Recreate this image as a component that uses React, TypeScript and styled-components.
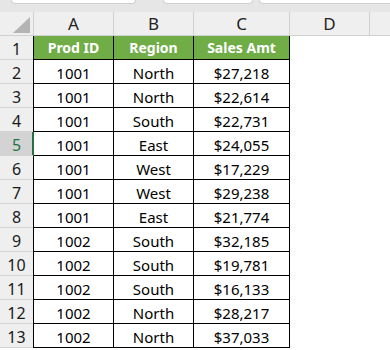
import React from "react";
import styled, { createGlobalStyle } from "styled-components";

const Global = createGlobalStyle`
  html, body { margin: 0; padding: 0; background: #ffffff; }
  body { overflow: hidden; font-family: "Noto Sans", "Liberation Sans", sans-serif; }
`;

const Sheet = styled.div`
  width: 390px;
  height: 350px;
  overflow: hidden;
  background: #ffffff;
  display: flex;
  flex-direction: column;
`;

const TopStrip = styled.div`
  height: 12px;
  flex: none;
  background: #e6e6e6;
  display: flex;
  align-items: flex-start;
  padding-left: 11px;
  gap: 0;
  box-sizing: border-box;
`;

const Field = styled.div<{ $w?: number; $ml?: number }>`
  height: 4px;
  width: ${(p) => (p.$w ? `${p.$w}px` : "auto")};
  flex: ${(p) => (p.$w ? "none" : "1")};
  margin-left: ${(p) => p.$ml ?? 0}px;
  margin-right: ${(p) => (p.$w ? 0 : -10)}px;
  background: #ffffff;
  border: 1px solid #cfcfcf;
  border-top: none;
  border-radius: 0 0 5px 5px;
  box-sizing: border-box;
`;

const Row = styled.div`
  display: flex;
  height: 24px;
  flex: none;
`;

const Corner = styled.div`
  width: 34px;
  height: 24px;
  flex: none;
  box-sizing: border-box;
  background: #efefef;
  border-right: 1px solid #d0d0d0;
  border-bottom: 1px solid #d0d0d0;
  display: flex;
  align-items: flex-end;
  justify-content: flex-end;
  padding: 0 3px 2px 0;
`;

const ColHead = styled.div<{ $w?: number }>`
  width: ${(p) => (p.$w ? `${p.$w}px` : "auto")};
  flex: ${(p) => (p.$w ? "none" : "1")};
  height: 24px;
  box-sizing: border-box;
  background: #efefef;
  border-right: ${(p) => (p.$w ? "1px solid #d0d0d0" : "none")};
  border-bottom: 1px solid #d0d0d0;
  display: flex;
  align-items: center;
  justify-content: center;
  font-size: 17px;
  color: #222222;
  line-height: 1;
`;

const RowHead = styled.div<{ $sel?: boolean }>`
  width: 33px;
  height: 24px;
  flex: none;
  box-sizing: border-box;
  background: ${(p) => (p.$sel ? "#d3d3d3" : "#efefef")};
  border-bottom: 1px solid #d4d4d4;
  color: ${(p) => (p.$sel ? "#217346" : "#1a1a1a")};
  font-size: 16px;
  display: flex;
  align-items: center;
  justify-content: center;
  padding-top: 2px;
  position: relative;
  z-index: 1;
  box-shadow: ${(p) =>
    p.$sel ? "inset -1px 0 0 #217346, 1px 0 0 #217346" : "none"};
`;

const Cell = styled.div<{ $w: number; $first?: boolean; $head?: boolean }>`
  width: ${(p) => p.$w}px;
  height: 24px;
  flex: none;
  box-sizing: border-box;
  border-right: 1px solid #000000;
  border-bottom: 1px solid #000000;
  border-left: ${(p) => (p.$first ? "1px solid #000000" : "none")};
  background: ${(p) => (p.$head ? "#70ad47" : "#ffffff")};
  color: ${(p) => (p.$head ? "#ffffff" : "#000000")};
  font-weight: ${(p) => (p.$head ? 700 : 400)};
  font-size: ${(p) => (p.$head ? 14 : 15)}px;
  display: flex;
  align-items: center;
  justify-content: center;
  padding-top: ${(p) => (p.$head ? 0 : 3)}px;
  white-space: nowrap;
`;

const Blank = styled.div`
  flex: 1;
  height: 24px;
  background: #ffffff;
`;

const rows: [string, string, string][] = [
  ["1001", "North", "$27,218"],
  ["1001", "North", "$22,614"],
  ["1001", "South", "$22,731"],
  ["1001", "East", "$24,055"],
  ["1001", "West", "$17,229"],
  ["1001", "West", "$29,238"],
  ["1001", "East", "$21,774"],
  ["1002", "South", "$32,185"],
  ["1002", "South", "$19,781"],
  ["1002", "South", "$16,133"],
  ["1002", "North", "$28,217"],
  ["1002", "North", "$37,033"],
];

export default function App() {
  return (
    <>
      <Global />
      <Sheet>
        <TopStrip>
          <Field $w={125} />
          <Field $w={90} $ml={27} />
          <Field $ml={6} />
        </TopStrip>
        <Row>
          <Corner>
            <svg width="17" height="16" viewBox="0 0 17 16">
              <polygon points="0,16 17,16 17,0" fill="#b4b4b4" />
            </svg>
          </Corner>
          <ColHead $w={80}>A</ColHead>
          <ColHead $w={80}>B</ColHead>
          <ColHead $w={96}>C</ColHead>
          <ColHead $w={80}>D</ColHead>
          <ColHead />
        </Row>
        <Row>
          <RowHead>1</RowHead>
          <Cell $w={81} $first $head>
            Prod ID
          </Cell>
          <Cell $w={80} $head>
            Region
          </Cell>
          <Cell $w={96} $head>
            Sales Amt
          </Cell>
          <Blank />
        </Row>
        {rows.map((r, i) => (
          <Row key={i}>
            <RowHead $sel={i + 2 === 5}>{i + 2}</RowHead>
            <Cell $w={81} $first>
              {r[0]}
            </Cell>
            <Cell $w={80}>{r[1]}</Cell>
            <Cell $w={96}>{r[2]}</Cell>
            <Blank />
          </Row>
        ))}
      </Sheet>
    </>
  );
}
